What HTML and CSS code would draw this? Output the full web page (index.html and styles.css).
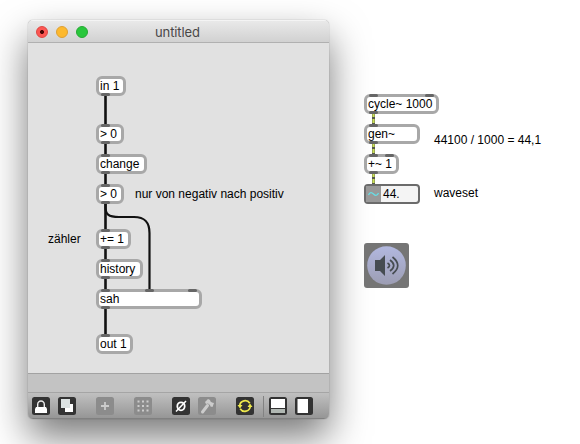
FILE: index.html
```html
<!DOCTYPE html>
<html lang="de">
<head>
<meta charset="utf-8">
<title>untitled</title>
<link rel="stylesheet" href="styles.css">
</head>
<body>
<main class="desktop">
  <section class="window">
    <header class="titlebar">
      <div class="lights"><i class="light close"></i><i class="light minimize"></i><i class="light maximize"></i></div>
      <h1 class="title">untitled</h1>
    </header>
    <div class="canvas">
      <svg class="cords" width="301" height="330" viewBox="0 0 301 330" fill="none">
        <path class="cord" d="M77.500 52V82M77.500 100V112M77.500 130V142M77.500 160V187M77.500 205V217M77.500 235V247M77.500 265V292"/>
        <path class="cord thin" d="M77.500 160V164C77.500 171 80 174 91 174H106C117 174 121.500 179 121.500 190V247"/>
      </svg>
      <div class="object in1"><span>in 1</span><b class="port outlet"></b></div>
      <div class="object gt1"><span>&gt; 0</span><b class="port"></b><b class="port outlet"></b></div>
      <div class="object change"><span>change</span><b class="port"></b><b class="port outlet"></b></div>
      <div class="object gt2"><span>&gt; 0</span><b class="port"></b><b class="port outlet"></b></div>
      <div class="object plus"><span>+= 1</span><b class="port"></b><b class="port outlet"></b></div>
      <div class="object history"><span>history</span><b class="port"></b><b class="port outlet"></b></div>
      <div class="object sah"><span>sah</span><b class="port"></b><b class="port second"></b><b class="port last"></b><b class="port outlet"></b></div>
      <div class="object out1"><span>out 1</span><b class="port"></b></div>
      <p class="comment edge">nur von negativ nach positiv</p>
      <p class="comment counter">zähler</p>
    </div>
    <div class="status"></div>
    <footer class="toolbar">
      <svg class="tool lock" viewBox="0 0 18 18"><path d="M5.700 10V7.500a3.300 3.500 0 0 1 6.600 0V10" fill="none" stroke="#eee" stroke-width="1.400"/><path d="M4 10h10l1 2v4H3v-4z" fill="#fff"/></svg>
      <svg class="tool layers" viewBox="0 0 18 18"><path d="M7 7h8v8H7z" fill="#fff"/><path d="M3 2h9v9H3z" fill="#dce2e2"/></svg>
      <svg class="tool add dim" viewBox="0 0 18 18"><path d="M9 5v8M5 9h8" stroke="#cbcbcb" stroke-width="1.800"/></svg>
      <svg class="tool dots dim" viewBox="0 0 18 18"><path d="M3.500 4.500h12M3.500 9h12M3.500 13.500h12" stroke="#ccc" stroke-width="2" stroke-dasharray="2 2.500"/></svg>
      <svg class="tool zero" viewBox="0 0 18 18" fill="none" stroke="#fff"><ellipse cx="9" cy="9.300" rx="3.700" ry="4" stroke-width="1.800"/><path d="M4 14.500L14 4" stroke-width="1.500"/></svg>
      <svg class="tool hammer dim" viewBox="0 0 18 18"><path d="M4.500 15L9.500 8.500" stroke="#ccc" stroke-width="3" stroke-linecap="round"/><path d="M7 5l3-3 2 1 .5 1.500L14 5.500l2 .5-1.500 4-2-.5-.5-1.500-2-1.500L8 7z" fill="#ccc"/></svg>
      <svg class="tool cycle" viewBox="0 0 18 18"><path d="M3.700 8.500A5.500 5.500 0 0 1 13.800 6.300M14.300 9.500A5.500 5.500 0 0 1 4.200 11.700" fill="none" stroke="#eee94d" stroke-width="1.700"/><path d="M1.500 8h5L4 11.500zM11.500 10h5L14 6.500z" fill="#eee94d"/></svg>
      <i class="divider"></i>
      <svg class="tool bottom" viewBox="0 0 18 18"><path d="M2 2h14v9H2z" fill="#fff"/><path d="M2 12h14v4H2z" fill="#b1b8b3"/></svg>
      <svg class="tool side" viewBox="0 0 18 18"><path d="M2.500 2h10.500v14H2.500z" fill="#fff"/></svg>
    </footer>
  </section>
  <section class="patch">
    <svg class="signals" width="20" height="120" viewBox="0 0 20 120"><path class="signal-back" d="M9.500 19V31M9.500 49V61M9.500 79V91"/><path class="signal-dash" d="M9.500 19V31M9.500 49V61M9.500 79V91"/></svg>
    <div class="object osc"><span>cycle~ 1000</span><b class="port"></b><b class="port last"></b><b class="port outlet"></b></div>
    <div class="object gen"><span>gen~</span><b class="port"></b><b class="port outlet"></b></div>
    <div class="object add-signal"><span>+~ 1</span><b class="port"></b><b class="port last"></b><b class="port outlet"></b></div>
    <div class="number"><svg viewBox="0 0 15 16" width="15" height="16"><path d="M2.500 9C4 5.500 6 6.500 7.500 8S11 10.500 12.500 7" fill="none" stroke="#66e0e8" stroke-width="1.300"/></svg><span>44.</span></div>
    <p class="comment formula">44100 / 1000 = 44,1</p>
    <p class="comment waveset">waveset</p>
    <svg class="speaker" width="45" height="45" viewBox="0 0 45 45">
      <defs><linearGradient id="disc" x2="0" y2="1"><stop stop-color="#b2b8df"/><stop offset="1" stop-color="#9c9db3"/></linearGradient></defs>
      <rect width="45" height="45" rx="3" fill="#757575"/><circle cx="22.500" cy="22.500" r="19.300" fill="url(#disc)"/>
      <path d="M11 17h5l5-5v21l-5-5h-5z" fill="#464c51"/>
      <path d="M23.500 20q4 2.500 0 5M26 17q7.500 5.500 0 11M28.500 14q10.500 8.500 0 17" fill="none" stroke="#464c51" stroke-width="1.700"/>
    </svg>
  </section>
</main>
</body>
</html>
```

FILE: styles.css
```css
* { box-sizing: border-box; }
body { margin: 0; background: #fff; font: 12px/14px "Liberation Sans", Arial, sans-serif; color: #000; overflow: hidden; }
.desktop { display: flex; width: 580px; height: 444px; padding: 20px 0 0 28px; overflow: hidden; }
.window { display: flex; flex-direction: column; flex: none; width: 301px; height: 399px; border-radius: 5px; background: #e1e1e1; box-shadow: 0 0 1px rgba(0,0,0,.5), 0 18px 38px rgba(0,0,0,.53); overflow: hidden; }
.titlebar { display: flex; align-items: center; height: 23px; padding-left: 8px; border-top: 1px solid #f4f4f4; border-bottom: 1px solid #b0b0b0; background: linear-gradient(#e9e9e9, #d1d1d1); }
.lights { display: flex; gap: 8px; width: 119px; }
.light { width: 12px; height: 12px; border: 1px solid; border-radius: 50%; }
.close { border-color: #df443f; background: radial-gradient(circle, #4b0504 0 1.7px, #fc5753 2.3px); }
.minimize { border-color: #dea033; background: #fdb92e; }
.maximize { border-color: #27a934; background: #29c73c; }
.title { margin: 0; font: 400 13px/18px Inter, sans-serif; letter-spacing: -.1px; color: #494747; }
.canvas { position: relative; height: 330px; }
.status { height: 19px; border-top: 1px solid #a2a2a2; background: #c3c3c3; }
.toolbar { display: flex; align-items: flex-start; height: 27px; padding: 4px 0 0 4px; border-top: 1px solid #a5a5a5; border-bottom: 1px solid #808080; background: linear-gradient(#c0c0c0, #969696); }
.tool { flex: none; width: 18px; height: 18px; border-radius: 2.5px; background: #333; }
.dim { background: #8c8c8c; }
.layers { margin-left: 8px; }
.add, .dots, .zero { margin-left: 20px; }
.hammer { margin-left: 8px; }
.cycle { margin-left: 20px; }
.divider { width: 1px; height: 21px; margin: -1px 5px 0 9px; background: #828282; }
.side { margin-left: 8px; }
.cords { position: absolute; inset: 0 auto auto 0; }
.cord { stroke: #111; stroke-width: 2.6; }
.thin { stroke-width: 2.2; }
.object { position: absolute; left: 68px; height: 20px; padding: 0 0 0 1px; border: 3px solid #a8a8a8; border-radius: 6px; background: #fff; white-space: nowrap; }
.port { position: absolute; left: 2px; top: -3px; width: 9px; height: 3px; border-radius: 2px; background: #666; }
.outlet { top: auto; bottom: -3px; }
.second { left: 46px; }
.last { left: auto; right: 2px; }
.in1 { top: 33px; width: 30px; }
.gt1 { top: 81px; width: 28px; }
.change { top: 111px; width: 51px; }
.gt2 { top: 141px; width: 28px; }
.plus { top: 186px; width: 35px; }
.history { top: 216px; width: 47px; }
.sah { top: 246px; width: 106px; }
.out1 { top: 291px; width: 37px; }
.comment { position: absolute; margin: 0; white-space: nowrap; }
.edge { left: 107px; top: 144px; }
.counter { left: 20px; top: 189px; }
.patch { position: relative; flex: none; width: 200px; height: 220px; margin: 74px 0 0 35px; }
.patch .object { left: 0; }
.signals { position: absolute; left: 0; top: 0; }
.signal-back { stroke: #55594a; stroke-width: 3; }
.signal-dash { stroke: #cbe258; stroke-width: 2.2; stroke-dasharray: 4 2; }
.osc { top: 0; width: 75px; }
.gen { top: 30px; width: 56px; }
.add-signal { top: 60px; width: 35px; }
.number { position: absolute; top: 90px; left: 0; display: flex; align-items: center; width: 56px; height: 20px; border: 2px solid #6b6b6b; border-radius: 4px; background: #f4f4f4; }
.number svg { background: #999; }
.number span { margin-left: 2px; }
.formula { left: 70px; top: 39px; }
.waveset { left: 70px; top: 92px; }
.speaker { position: absolute; left: 0; top: 149px; }
```
